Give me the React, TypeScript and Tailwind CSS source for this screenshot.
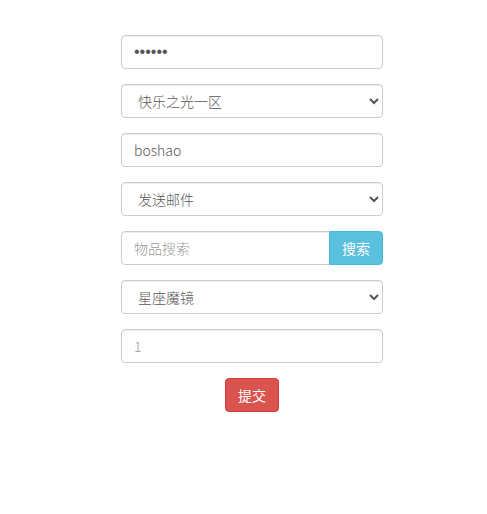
import React from "react";

const font = { fontFamily: '"Noto Sans CJK SC", "Noto Sans", sans-serif' };

const inputCls =
  "block w-full h-[34px] px-3 text-[14px] font-light text-[#555] bg-white border border-[#ccc] rounded-[4px] shadow-[inset_0_1px_1px_rgba(0,0,0,0.075)] outline-none placeholder:text-[#999]";

export default function App() {
  return (
    <div className="w-[487px] h-[514px] bg-white" style={font}>
      <form className="ml-[121px] w-[262px] pt-[35px] flex flex-col gap-[15px]">
        <input
          type="password"
          defaultValue="123456"
          className={inputCls}
          style={{ fontFamily: '"Liberation Sans", Arial, sans-serif', fontSize: 16 }}
        />
        <select className={inputCls} defaultValue="a">
          <option value="a">快乐之光一区</option>
        </select>
        <input type="text" defaultValue="boshao" className={inputCls} />
        <select className={inputCls} defaultValue="a">
          <option value="a">发送邮件</option>
        </select>
        <div className="flex">
          <input
            type="text"
            placeholder="物品搜索"
            className="block flex-1 min-w-0 h-[34px] px-3 text-[14px] font-light text-[#555] bg-white border border-[#ccc] rounded-l-[4px] shadow-[inset_0_1px_1px_rgba(0,0,0,0.075)] outline-none placeholder:text-[#999]"
          />
          <button
            type="button"
            className="w-[54px] h-[34px] -ml-px text-[14px] text-white bg-[#5bc0de] border border-[#46b8da] rounded-r-[4px]"
          >
            搜索
          </button>
        </div>
        <select className={inputCls} defaultValue="a">
          <option value="a">星座魔镜</option>
        </select>
        <input type="text" placeholder="1" className={inputCls} />
        <div className="flex justify-center">
          <button
            type="button"
            className="h-[34px] px-3 text-[14px] text-white bg-[#d9534f] border border-[#d43f3a] rounded-[4px]"
          >
            提交
          </button>
        </div>
      </form>
    </div>
  );
}
